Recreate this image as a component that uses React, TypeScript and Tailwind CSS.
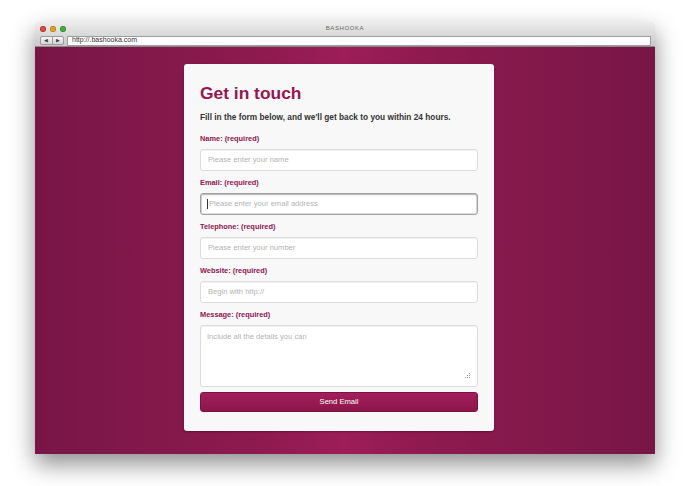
const fields = [
  { label: "Name: (required)", placeholder: "Please enter your name" },
  { label: "Email: (required)", placeholder: "Please enter your email address", focused: true },
  { label: "Telephone: (required)", placeholder: "Please enter your number" },
  { label: "Website: (required)", placeholder: "Begin with http://" },
];

function Field({
  label,
  placeholder,
  focused,
}: {
  label: string;
  placeholder: string;
  focused?: boolean;
}) {
  return (
    <div className="flex flex-col">
      <label className="text-[7.4px] leading-[10px] font-bold text-[#8f1550]">{label}</label>
      <div
        className={
          focused
            ? "mt-[5px] flex h-[22px] items-center rounded-[3px] border border-[#a0a0a0] bg-white pl-[6px] shadow-[inset_0_0_0_1px_rgba(0,0,0,0.12),inset_0_1px_2px_rgba(0,0,0,0.2)]"
            : "mt-[5px] flex h-[22px] items-center rounded-[3px] border border-[#dcdcdc] bg-white pl-[7px] shadow-[inset_0_1px_1px_rgba(0,0,0,0.06)]"
        }
      >
        {focused && <span className="mr-px h-[10px] w-px bg-[#333]" />}
        <input
          readOnly
          placeholder={placeholder}
          className="w-full bg-transparent text-[7.6px] outline-none placeholder:text-[#b3b3b3]"
        />
      </div>
    </div>
  );
}

export default function App() {
  return (
    <div
      className="h-[486px] w-[690px] bg-white pl-[35px] pt-[22px]"
      style={{ fontFamily: '"Liberation Sans", Arial, sans-serif' }}
    >
      <div className="flex h-[432px] w-[620px] flex-col shadow-[0_10px_22px_rgba(0,0,0,0.45)]">
        {/* window chrome */}
        <div className="flex h-[25px] flex-col rounded-t-[3px] border-b border-[#8a8a8a] bg-gradient-to-b from-[#ececec] to-[#c9c9c9]">
          <div className="relative flex h-[13px] items-center pl-[5px]">
            <div className="flex gap-[4px]">
              <span className="h-[6px] w-[6px] rounded-full bg-[#e0443e] shadow-[inset_0_0_0_0.5px_rgba(0,0,0,0.3)]" />
              <span className="h-[6px] w-[6px] rounded-full bg-[#dea123] shadow-[inset_0_0_0_0.5px_rgba(0,0,0,0.3)]" />
              <span className="h-[6px] w-[6px] rounded-full bg-[#3fac3a] shadow-[inset_0_0_0_0.5px_rgba(0,0,0,0.3)]" />
            </div>
            <span className="absolute inset-x-0 top-[2px] text-center text-[6px] tracking-[0.6px] text-[#666]">
              BASHOOKA
            </span>
          </div>
          <div className="flex h-[11px] items-center gap-[3px] pl-[5px] pr-[4px]">
            <div className="flex h-[9px] w-[24px] rounded-[2px] border border-[#9a9a9a] bg-gradient-to-b from-[#f6f6f6] to-[#d6d6d6]">
              <span className="flex flex-1 items-center justify-center border-r border-[#9a9a9a] text-[5px] text-[#444]">◀</span>
              <span className="flex flex-1 items-center justify-center text-[5px] text-[#444]">▶</span>
            </div>
            <div className="flex h-[10px] flex-1 items-center border border-[#9d9d9d] bg-white pl-[4px] text-[7px] text-[#333]">
              http://.bashooka.com
            </div>
          </div>
        </div>

        {/* page */}
        <div className="flex flex-1 bg-[linear-gradient(to_right,#771646_0%,#8d1a4f_35%,#9c1d57_50%,#8d1a4f_65%,#771646_100%)] pl-[149px] pt-[17px]">
          <div className="flex h-[367px] w-[310px] flex-col rounded-[3px] bg-[#f8f8f8] px-4 pt-[18px] shadow-[0_1px_2px_rgba(0,0,0,0.3)]">
            <h1 className="text-[17.4px] leading-[22px] font-bold text-[#941652]">Get in touch</h1>
            <p className="mt-[6px] text-[8.3px] leading-[14px] font-bold text-[#333]">
              Fill in the form below, and we'll get back to you within 24 hours.
            </p>
            <div className="mt-[10px] flex flex-col gap-[7px]">
              {fields.map((f) => (
                <Field key={f.label} {...f} />
              ))}
              <div className="flex flex-col">
                <label className="text-[7.4px] leading-[10px] font-bold text-[#8f1550]">Message: (required)</label>
                <div className="relative mt-[5px] h-[62px] rounded-[3px] border border-[#dcdcdc] bg-white shadow-[inset_0_1px_1px_rgba(0,0,0,0.06)]">
                  <textarea
                    readOnly
                    placeholder="Include all the details you can"
                    className="h-full w-full resize-none bg-transparent px-[6px] pt-[5px] text-[7.6px] outline-none placeholder:text-[#b3b3b3]"
                  />
                  <svg className="absolute bottom-[6px] right-[6px]" width="7" height="7" viewBox="0 0 7 7">
                    <rect x="5" y="0" width="1" height="1" fill="#999" />
                    <rect x="3" y="2" width="1" height="1" fill="#999" />
                    <rect x="5" y="2" width="1" height="1" fill="#999" />
                    <rect x="1" y="4" width="1" height="1" fill="#999" />
                    <rect x="3" y="4" width="1" height="1" fill="#999" />
                    <rect x="5" y="4" width="1" height="1" fill="#999" />
                  </svg>
                </div>
                <button className="mt-[5px] h-[20px] rounded-[3px] border border-[#7d1242] bg-gradient-to-b from-[#a21f5c] to-[#8c1649] text-[7.6px] text-white">
                  Send Email
                </button>
              </div>
            </div>
          </div>
        </div>
      </div>
    </div>
  );
}
